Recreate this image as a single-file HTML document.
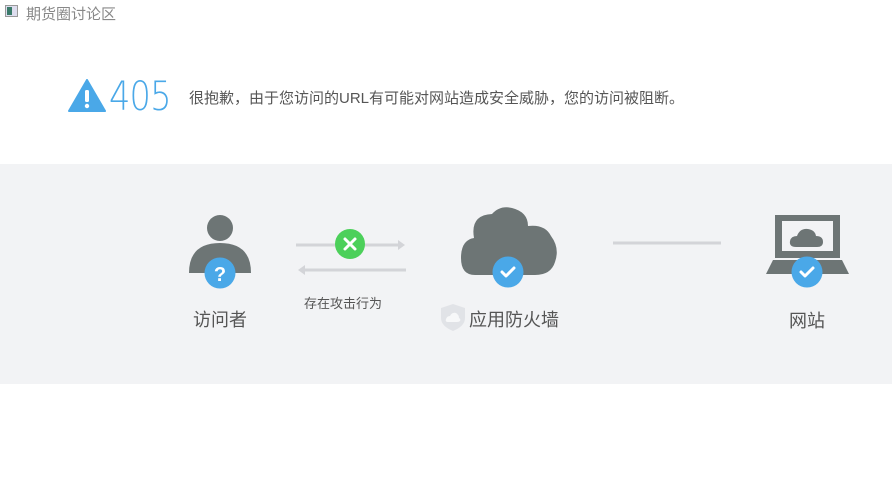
<!DOCTYPE html>
<html><head><meta charset="utf-8"><style>
body{margin:0;width:892px;height:489px;background:#fff;position:relative;overflow:hidden;font-family:"Liberation Sans","Noto Sans CJK SC",sans-serif}
.t{position:absolute;white-space:nowrap}
</style></head><body>
<div class="t" style="left:5px;top:5px;width:13px;height:12px;border:1px solid #999;background:#dde;box-sizing:border-box"><div style="width:5px;height:8px;margin:1px;background:#3a7a6a"></div></div>
<div class="t" style="left:26px;top:3px;font-size:15px;color:#888">期货圈讨论区</div>
<svg class="t" style="left:68px;top:79px" width="38" height="33" viewBox="0 0 38 33"><path d="M19 1 L37 32 L1 32 Z" fill="#4aa8e8" stroke="#4aa8e8" stroke-width="2" stroke-linejoin="round"/><rect x="17" y="11" width="4" height="12" rx="1.5" fill="#fff"/><circle cx="19" cy="27" r="2.2" fill="#fff"/></svg>
<div class="t" style="left:109px;top:74px;font-size:40px;color:#4aa8e8;font-family:'DejaVu Sans ExtraLight','DejaVu Sans',sans-serif;font-weight:200;letter-spacing:-1px;transform:scaleX(0.84);transform-origin:0 0">405</div>
<div class="t" style="left:189px;top:87px;font-size:15px;color:#555">很抱歉，由于您访问的URL有可能对网站造成安全威胁，您的访问被阻断。</div>
<div class="t" style="left:0;top:164px;width:892px;height:220px;background:#f2f3f5"></div>
<svg class="t" style="left:0;top:0" width="892" height="489">
<g fill="#6d7575">
<circle cx="220" cy="228" r="13"/>
<path d="M189 273 Q189 243 220 243 Q251 243 251 273 Z"/>
<path d="M474 238 Q470 215 492 214 Q500 205 512 208 Q528 212 528 226 Q545 224 551 236 Q560 248 555 262 Q551 275 535 275 L475 275 Q461 275 461 258 Q461 240 474 238 Z"/>
<rect x="775" y="215" width="65" height="43"/>
<path d="M773 260 L842 260 L849 274 L766 274 Z"/>
</g>
<rect x="782" y="221" width="51" height="30" fill="#f2f3f5"/>
<path d="M796 247 Q789 247 790 241 Q791 236 797 236 Q800 228 808 229 Q815 230 816 236 Q823 236 823 242 Q823 247 817 247 Z" fill="#6d7575"/>
<g stroke="#d3d4d8" stroke-width="3" fill="#d3d4d8">
<line x1="296" y1="245" x2="398" y2="245"/><path d="M398 240 L405 245 L398 250 Z" stroke="none"/>
<line x1="305" y1="270" x2="406" y2="270"/><path d="M305 265 L298 270 L305 275 Z" stroke="none"/>
<line x1="613" y1="243" x2="721" y2="243"/>
</g>
<circle cx="350" cy="244" r="15" fill="#4cd05a"/>
<path d="M345 239 L355 249 M355 239 L345 249" stroke="#fff" stroke-width="3" stroke-linecap="round"/>
<circle cx="220" cy="273" r="15.5" fill="#4aa8e8"/>
<text x="220" y="281" text-anchor="middle" font-size="20" font-weight="bold" fill="#fff" font-family="Liberation Sans">?</text>
<g fill="#4aa8e8"><circle cx="508" cy="272" r="15.5"/><circle cx="807" cy="272" r="15.5"/></g>
<g stroke="#fff" stroke-width="3" fill="none" stroke-linecap="round" stroke-linejoin="round"><path d="M502 272 L506 276 L514 268"/><path d="M801 272 L805 276 L813 268"/></g>
<path d="M453 304 L465 308 L465 318 Q465 326 453 331 Q441 326 441 318 L441 308 Z" fill="#e1e3e7"/>
<path d="M448 322 Q445 322 446 319 Q447 316 450 316 Q452 312 456 313 Q459 315 459 318 Q461 319 460 321 Q459 322 457 322 Z" fill="#f7f8f9"/>
</svg>
<div class="t" style="left:193px;top:306px;font-size:18px;color:#555">访问者</div>
<div class="t" style="left:304px;top:293px;font-size:13px;color:#555">存在攻击行为</div>
<div class="t" style="left:469px;top:306px;font-size:18px;color:#555">应用防火墙</div>
<div class="t" style="left:789px;top:307px;font-size:18px;color:#555">网站</div>
</body></html>
